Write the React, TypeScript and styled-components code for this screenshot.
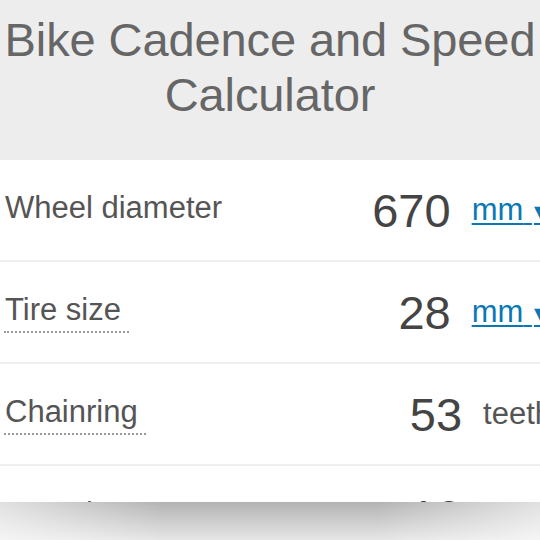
import React from "react";
import styled, { createGlobalStyle } from "styled-components";

const Global = createGlobalStyle`
  html, body {
    margin: 0;
    padding: 0;
    width: 540px;
    height: 540px;
    overflow: hidden;
    background: #ffffff;
    font-family: "Liberation Sans", Arial, Helvetica, sans-serif;
  }
`;

const Page = styled.div`
  width: 540px;
  height: 540px;
  overflow: hidden;
`;

const Header = styled.header`
  width: 540px;
  box-sizing: border-box;
  height: 160px;
  background: #ededed;
  padding: 12px 4px 0;
`;

const Title = styled.h1`
  margin: 0;
  font-weight: 400;
  font-size: 47px;
  line-height: 55px;
  color: #666666;
  text-align: center;
  letter-spacing: -0.1px;
`;

const Rows = styled.div`
  width: 560px;
`;

const Row = styled.div`
  display: flex;
  align-items: center;
  height: 100px;
  border-bottom: 2px solid #efefef;
  padding: 0 8px 0 4px;
`;

const Label = styled.span`
  flex: 1;
  display: flex;
  align-items: flex-start;
`;

const LabelText = styled.span<{ $hint?: boolean }>`
  font-size: 31px;
  color: #555555;
  padding: 0 8px 3px 1px;
  border-bottom: 2px dotted ${(p) => (p.$hint ? "#9a9a9a" : "transparent")};
`;

const Value = styled.span`
  font-size: 47px;
  color: #444444;
  text-align: right;
`;

const Unit = styled.span`
  margin-left: 21px;
  font-size: 31px;
  color: #555555;
  white-space: nowrap;
`;

const UnitLink = styled.a`
  margin-left: 21px;
  font-size: 31px;
  color: #0a78b4;
  text-decoration: underline;
  text-decoration-thickness: 2px;
  text-underline-offset: 3px;
  white-space: nowrap;
  cursor: pointer;
`;

const Caret = styled.span`
  font-family: "DejaVu Sans", sans-serif;
  font-size: 26px;
  padding-left: 2px;
  padding-right: 5px;
`;

const BottomShade = styled.div`
  position: fixed;
  left: 0;
  bottom: 0;
  width: 540px;
  height: 38px;
  background:
    linear-gradient(
      to right,
      rgba(255, 255, 255, 0.6) 0%,
      rgba(255, 255, 255, 0) 30%,
      rgba(255, 255, 255, 0) 70%,
      rgba(255, 255, 255, 0.6) 100%
    ),
    linear-gradient(to bottom, #b3b3b3 0%, #d2d2d2 60%, #e6e6e6 100%);
`;

type Field = {
  label: string;
  hint: boolean;
  value: string;
  unit: string;
  link: boolean;
};

const fields: Field[] = [
  { label: "Wheel diameter", hint: false, value: "670", unit: "mm", link: true },
  { label: "Tire size", hint: true, value: "28", unit: "mm", link: true },
  { label: "Chainring", hint: true, value: "53", unit: "teeth", link: false },
  { label: "Sprocket", hint: true, value: "19", unit: "teeth", link: false },
];

export default function App() {
  return (
    <Page>
      <Global />
      <Header>
        <Title>Bike Cadence and Speed Calculator</Title>
      </Header>
      <Rows>
        {fields.map((f) => (
          <Row key={f.label}>
            <Label>
              <LabelText $hint={f.hint}>{f.label}</LabelText>
            </Label>
            <Value>{f.value}</Value>
            {f.link ? (
              <UnitLink>
                {f.unit}
                {"\u00a0"}
                <Caret>▾</Caret>
              </UnitLink>
            ) : (
              <Unit>{f.unit}</Unit>
            )}
          </Row>
        ))}
      </Rows>
      <BottomShade />
    </Page>
  );
}
